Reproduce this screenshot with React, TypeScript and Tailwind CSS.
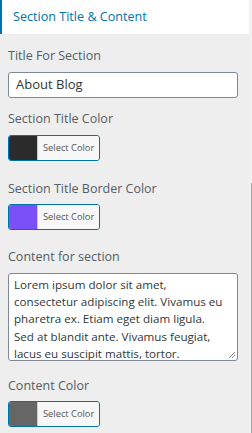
import React from 'react';

interface ColorPickerProps {
	color: string
}

const ColorPicker: React.FC<ColorPickerProps> = ({ color }) => {
	return (
		<div className="flex h-[26px] w-[92px] rounded-[3px] border border-[#0073aa] overflow-hidden">
			<div className="w-[28px] h-full" style={{ backgroundColor: color }} />
			<div className="flex-1 flex items-center pl-[5px] bg-[#f7f7f7] border-l border-[#ccc] text-[9.3px] text-[#555]">
				Select Color
			</div>
		</div>
	)
}

const Label: React.FC<{ text: string, className?: string }> = ({ text, className }) => {
	return (
		<div className={`text-[12.5px] leading-[18px] text-[#555d66] ${className ?? ''}`}>{text}</div>
	)
}

const contentLines = [
	"Lorem ipsum dolor sit amet,",
	"consectetur adipiscing elit. Vivamus eu",
	"pharetra ex. Etiam eget diam ligula.",
	"Sed at blandit ante. Vivamus feugiat,",
	"lacus eu suscipit mattis, tortor.",
]

const App: React.FC = () => {
	return (
		<div className="flex w-[252px] h-[433px] overflow-hidden bg-[#eeeeee]" style={{ fontFamily: '"Open Sans", "Noto Sans", sans-serif' }}>
			<div className="flex flex-col w-[249px]">
				<div className="h-[34px] shrink-0 bg-white border-l-2 border-[#0073aa] flex items-center pl-[11px] text-[12.6px] text-[#0073aa]">
					Section Title &amp; Content
				</div>
				<div className="flex flex-col px-[8px] pt-[13px]">
					<Label text="Title For Section" />
					<div className="mt-[7px] h-[26px] w-[230px] rounded-[3px] border border-[#7e8993] bg-white flex items-center px-[7px] text-[13px] text-[#32373c]">
						About Blog
					</div>

					<Label text="Section Title Color" className="mt-[12px]" />
					<div className="mt-[7px]"><ColorPicker color="#2b2b2b" /></div>

					<Label text="Section Title Border Color" className="mt-[19px]" />
					<div className="mt-[6px]"><ColorPicker color="#7b51f7" /></div>

					<Label text="Content for section" className="mt-[18px]" />
					<div className="relative mt-[7px] h-[88px] w-[230px] rounded-[3px] border border-[#7e8993] bg-white pl-[5px] pr-[4px] pt-[2px] text-[11.6px] leading-[17.2px] text-[#32373c] whitespace-nowrap overflow-hidden">
						{contentLines.map((line, i) => (
							<div key={i}>{line}</div>
						))}
						<svg className="absolute right-[2px] bottom-[2px]" width="7" height="7" viewBox="0 0 7 7">
							<path d="M7 1 L1 7 M7 4 L4 7" stroke="#888" strokeWidth="1" />
						</svg>
					</div>

					<Label text="Content Color" className="mt-[16px]" />
					<div className="mt-[6px]"><ColorPicker color="#666666" /></div>
				</div>
			</div>
			<div className="w-[3px] flex flex-col bg-[#f1f1f1]">
				<div className="h-[183px]" />
				<div className="flex-1 ml-[2px] w-[1px] bg-[#a3a3a3]" />
			</div>
		</div>
	)
}

export default App;
